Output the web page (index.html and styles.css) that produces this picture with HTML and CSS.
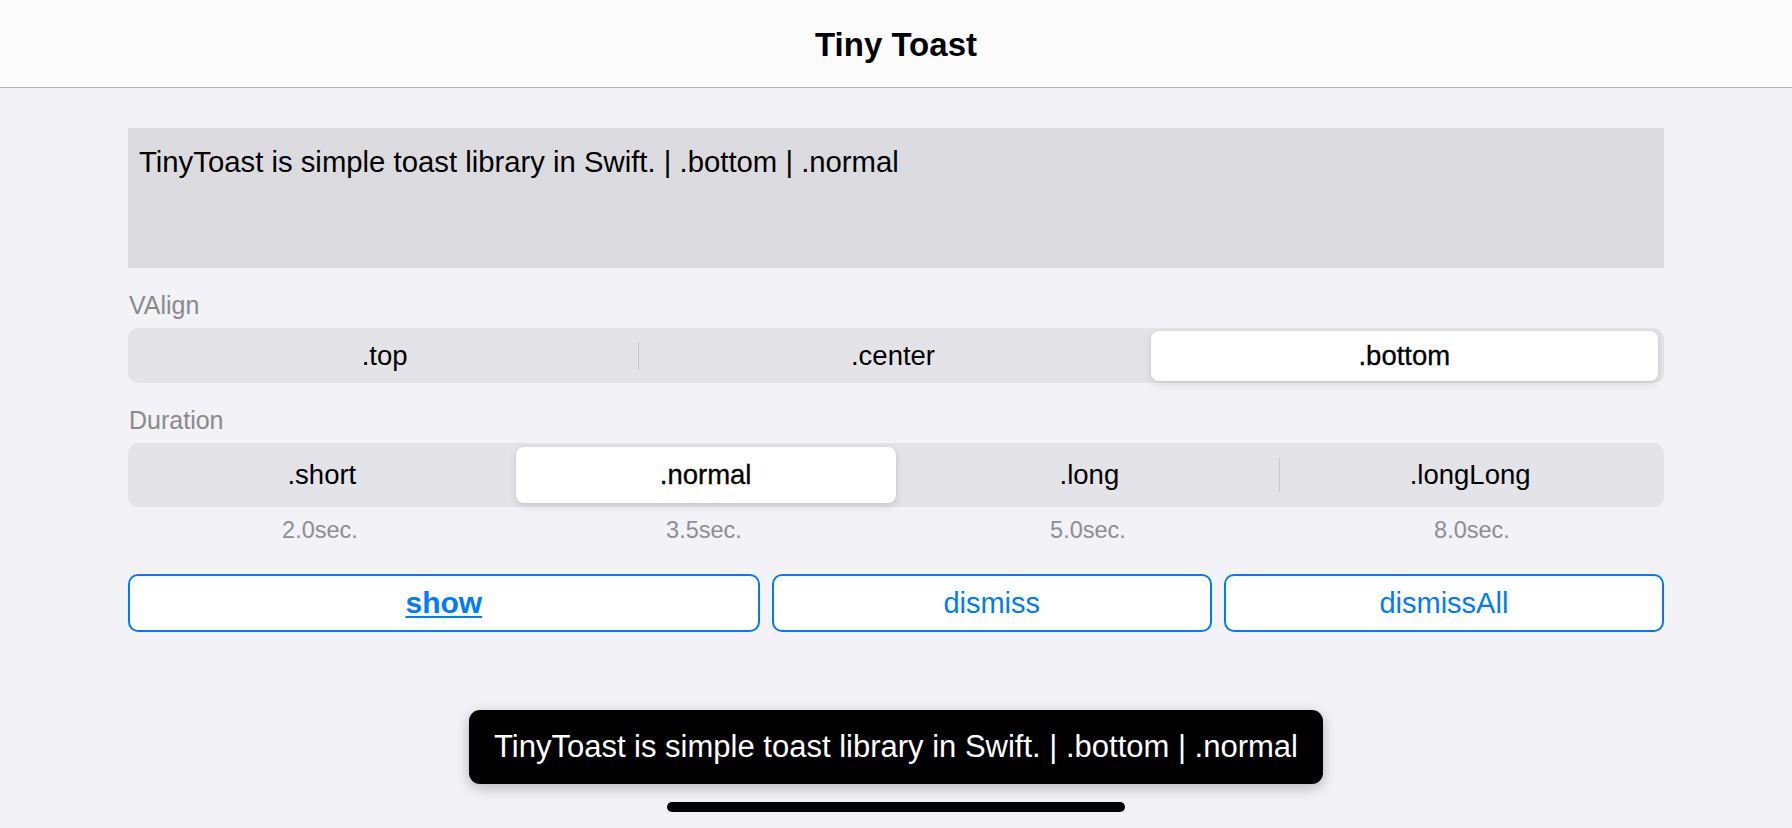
FILE: index.html
```html
<!DOCTYPE html>
<html lang="en">
<head>
<meta charset="utf-8">
<title>Tiny Toast</title>
<link rel="stylesheet" href="styles.css">
</head>
<body>
<div class="screen">
  <header class="navbar">
    <h1 class="nav-title">Tiny Toast</h1>
  </header>
  <main class="content">
    <div class="textview">TinyToast is simple toast library in Swift. | .bottom | .normal</div>

    <div class="section-label">VAlign</div>
    <div class="segmented seg-valign">
      <div class="segment">.top</div>
      <div class="divider"></div>
      <div class="segment">.center</div>
      <div class="divider hidden"></div>
      <div class="segment selected">.bottom</div>
    </div>

    <div class="section-label">Duration</div>
    <div class="segmented seg-duration">
      <div class="segment">.short</div>
      <div class="divider hidden"></div>
      <div class="segment selected">.normal</div>
      <div class="divider hidden"></div>
      <div class="segment">.long</div>
      <div class="divider"></div>
      <div class="segment">.longLong</div>
    </div>
    <div class="durations">
      <span>2.0sec.</span>
      <span>3.5sec.</span>
      <span>5.0sec.</span>
      <span>8.0sec.</span>
    </div>

    <div class="buttons">
      <button class="btn btn-show">show</button>
      <button class="btn">dismiss</button>
      <button class="btn">dismissAll</button>
    </div>
  </main>

  <div class="toast">TinyToast is simple toast library in Swift. | .bottom | .normal</div>
  <div class="home-indicator"></div>
</div>
</body>
</html>
```

FILE: styles.css
```css
* {
  box-sizing: border-box;
}

html, body {
  margin: 0;
  padding: 0;
}

body {
  font-family: "Liberation Sans", Arial, sans-serif;
  background: #f2f2f7;
  color: #000;
}

.screen {
  position: relative;
  width: 1792px;
  height: 828px;
  overflow: hidden;
  background: #f2f2f7;
}

.navbar {
  height: 88px;
  background: #fcfcfc;
  border-bottom: 1px solid #b2b2b2;
  display: flex;
  align-items: center;
  justify-content: center;
  padding-top: 2px;
}

.nav-title {
  margin: 0;
  font-size: 33px;
  font-weight: 700;
  letter-spacing: 0;
}

.content {
  padding: 40px 128px 0;
  display: flex;
  flex-direction: column;
}

.textview {
  height: 140px;
  background: #dcdbe0;
  padding: 16px 11px;
  font-size: 29.3px;
  line-height: 35px;
}

.section-label {
  margin-top: 22px;
  font-size: 25px;
  line-height: 30px;
  color: #8a8a8e;
  padding-left: 1px;
}

.seg-duration + .durations {
  margin-top: 10px;
}

.section-label + .segmented {
  margin-top: 8px;
}

.segmented {
  display: flex;
  align-items: center;
  background: #e3e3e8;
  border-radius: 10px;
}

.seg-valign {
  height: 55px;
  padding: 3px 3px 2px;
}

.seg-duration {
  height: 64px;
  padding: 4px;
}

.segment {
  flex: 1;
  height: 100%;
  display: flex;
  align-items: center;
  justify-content: center;
  font-size: 27.5px;
  color: #000;
  border-radius: 8px;
}

.segment.selected {
  flex: 1;
  margin: 0 3px;
  background: #fff;
  box-shadow: 0 3px 8px rgba(0, 0, 0, 0.12), 0 0 0 0.5px rgba(0, 0, 0, 0.04);
  -webkit-text-stroke: 0.3px #000;
}

.divider {
  width: 1px;
  height: 28px;
  background: #c8c8cd;
  flex: none;
}

.seg-duration .divider {
  height: 34px;
}

.divider.hidden {
  background: transparent;
}

.durations {
  display: grid;
  grid-template-columns: repeat(4, 1fr);
  font-size: 23.5px;
  line-height: 26px;
  color: #8e8e93;
  text-align: center;
}

.buttons {
  margin-top: 31px;
  display: grid;
  grid-template-columns: 1.435fr 1fr 1fr;
  gap: 12px;
}

.btn {
  height: 58px;
  border: 2px solid #007aff;
  border-radius: 10px;
  background: #fff;
  color: #007aff;
  font-family: "Liberation Sans", Arial, sans-serif;
  font-size: 29px;
  padding: 0;
}

.btn-show {
  font-weight: 700;
  text-decoration: underline;
  text-decoration-thickness: 2px;
  text-underline-offset: 3px;
  font-size: 30px;
}

.toast {
  position: absolute;
  left: 50%;
  bottom: 44px;
  transform: translateX(-50%);
  height: 74px;
  padding: 0 25px;
  display: flex;
  align-items: center;
  white-space: nowrap;
  background: #000;
  color: #fff;
  font-size: 31px;
  border-radius: 11px;
  box-shadow: 0 4px 14px rgba(0, 0, 0, 0.25);
}

.home-indicator {
  position: absolute;
  left: 50%;
  bottom: 16px;
  width: 458px;
  height: 10px;
  margin-left: -229px;
  border-radius: 5px;
  background: #000;
}
```
